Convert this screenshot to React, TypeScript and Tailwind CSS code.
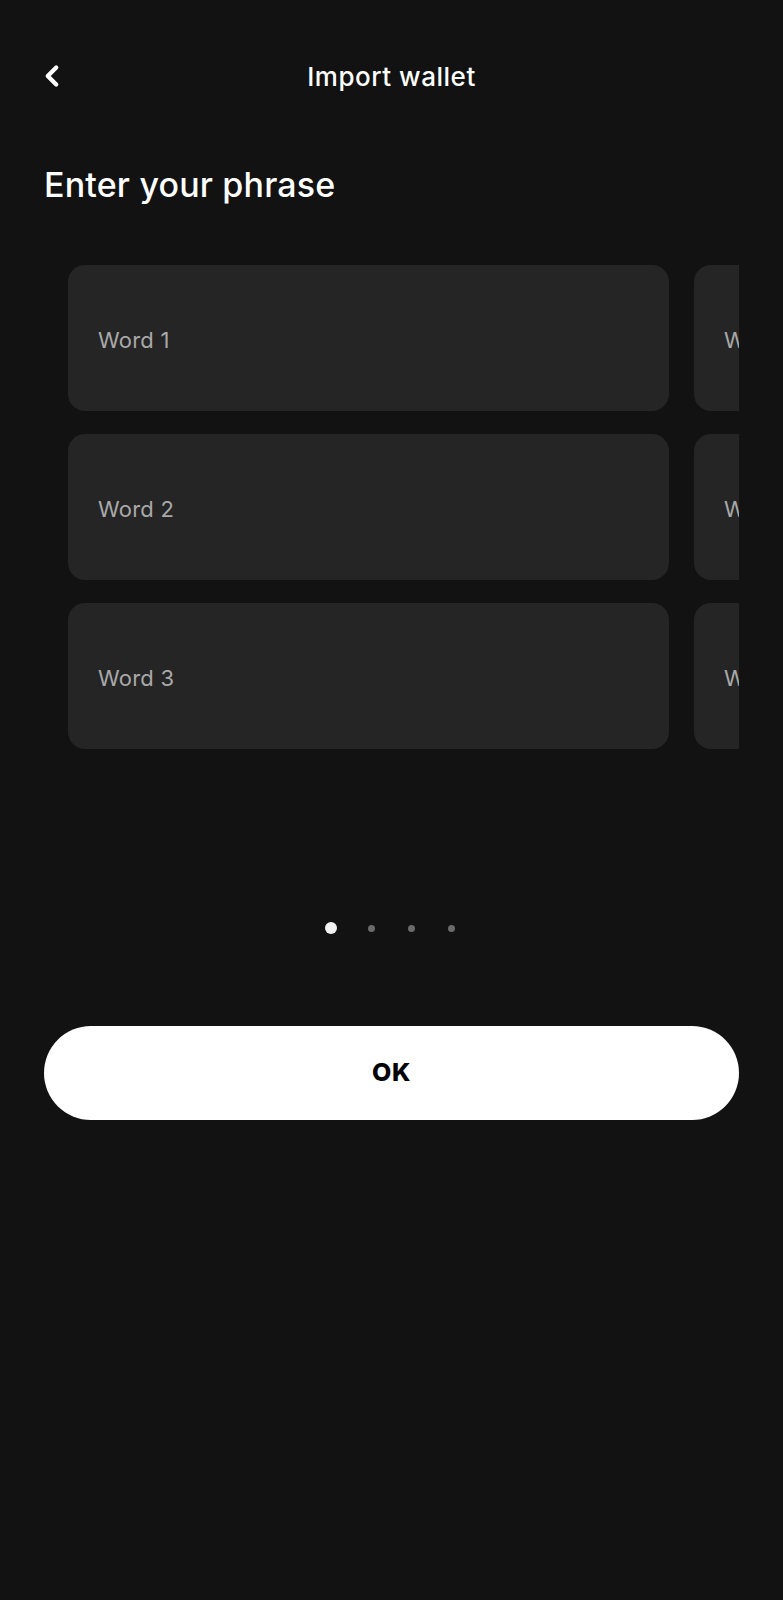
import { ChevronLeft } from 'lucide-react'

const pages = [
  ['Word 1', 'Word 2', 'Word 3'],
  ['Word 4', 'Word 5', 'Word 6'],
]

function WordCard({ label }: { label: string }) {
  return (
    <div className="h-[146px] w-[601px] shrink-0 rounded-[17px] bg-[#252525] flex items-center pl-[30px] pt-[4px]">
      <span className="text-[22px] text-[#a9a9a9] tracking-[0.01em]">{label}</span>
    </div>
  )
}

export default function App() {
  return (
    <div
      className="min-h-[1600px] bg-[#121212] px-[44px] text-white"
      style={{ fontFamily: 'Inter, "Noto Sans", sans-serif' }}
    >
      {/* Header */}
      <div className="pt-[51px] h-[101px] grid grid-cols-[48px_1fr_48px] items-center">
        <button className="flex items-center -ml-[9px] text-white">
          <ChevronLeft size={34} strokeWidth={3} />
        </button>
        <h1 className="text-center text-[26px] font-medium tracking-[0.02em]">Import wallet</h1>
        <div />
      </div>

      <h2 className="mt-[64px] text-[34px] font-medium leading-[40px] tracking-[0.005em]">Enter your phrase</h2>

      {/* Word carousel */}
      <div className="mt-[60px] overflow-hidden">
        <div className="flex gap-[25px] pl-[24px]">
          {pages.map((col, i) => (
            <div key={i} className="flex flex-col gap-[23px] shrink-0">
              {col.map(w => (
                <WordCard key={w} label={w} />
              ))}
            </div>
          ))}
        </div>
      </div>

      {/* Pager dots */}
      <div className="mt-[173px] flex items-center justify-center gap-[33px] h-[12px] pr-[3px]">
        <span className="w-[12px] h-[12px] rounded-full bg-[#f2f2f2] -mr-[2px]" />
        <span className="w-[7px] h-[7px] rounded-full bg-[#6a6a6a]" />
        <span className="w-[7px] h-[7px] rounded-full bg-[#6a6a6a]" />
        <span className="w-[7px] h-[7px] rounded-full bg-[#6a6a6a]" />
      </div>

      <button className="mt-[92px] w-full h-[94px] rounded-full bg-white text-black text-[25px] font-extrabold tracking-[0.02em]">
        OK
      </button>
    </div>
  )
}
